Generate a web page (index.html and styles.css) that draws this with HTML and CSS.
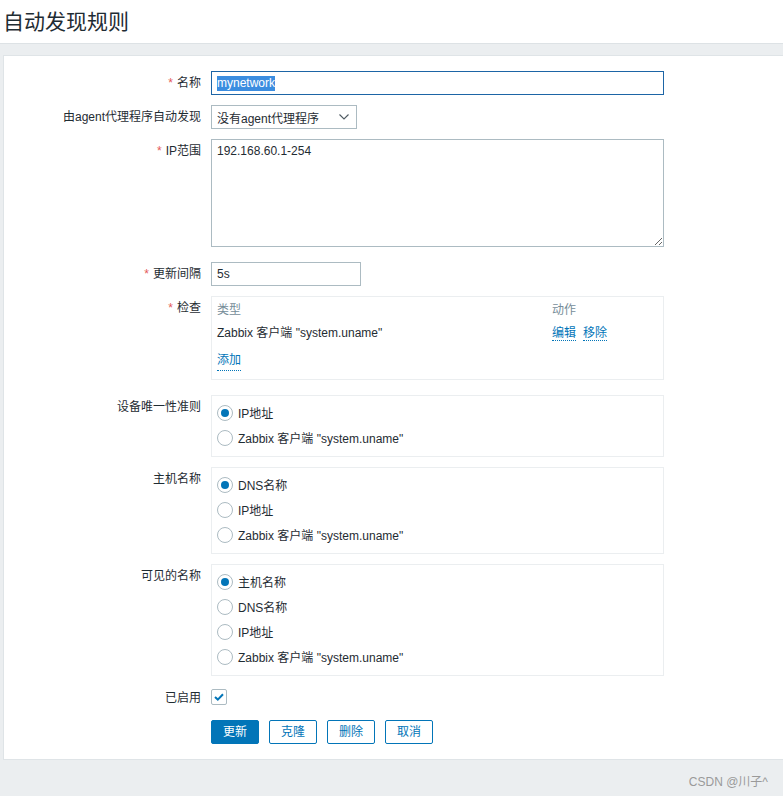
FILE: index.html
```html
<!DOCTYPE html>
<html lang="zh">
<head>
<meta charset="utf-8">
<title>自动发现规则</title>
<link rel="stylesheet" href="styles.css">
</head>
<body>
<header class="header"><h1 class="title">自动发现规则</h1></header>
<main class="main">
  <form class="panel">
    <div class="row">
      <label class="label"><span class="req">*</span>名称</label>
      <div class="field"><div class="input input-focus wide"><span class="sel">mynetwork</span></div></div>
    </div>
    <div class="row">
      <label class="label">由agent代理程序自动发现</label>
      <div class="field">
        <div class="input select"><span>没有agent代理程序</span>
          <svg class="chev" width="10" height="6" viewBox="0 0 10 6"><path d="M0.5 0.5 L5 5 L9.5 0.5" fill="none" stroke="#4f5b62" stroke-width="1.1"/></svg>
        </div>
      </div>
    </div>
    <div class="row row-tall">
      <label class="label"><span class="req">*</span>IP范围</label>
      <div class="field"><textarea class="textarea" readonly>192.168.60.1-254</textarea></div>
    </div>
    <div class="row">
      <label class="label"><span class="req">*</span>更新间隔</label>
      <div class="field"><input class="input interval" type="text" value="5s"></div>
    </div>
    <div class="row row-tall">
      <label class="label"><span class="req">*</span>检查</label>
      <div class="field">
        <div class="box checks">
          <div class="crow head"><span class="c1">类型</span><span class="c2">动作</span></div>
          <div class="crow item"><span class="c1">Zabbix 客户端 "system.uname"</span><span class="c2"><a class="link">编辑</a><a class="link">移除</a></span></div>
          <div class="crow add"><a class="link">添加</a></div>
        </div>
      </div>
    </div>
    <div class="row">
      <label class="label">设备唯一性准则</label>
      <div class="field">
        <ul class="box radios">
          <li><span class="radio on"></span>IP地址</li>
          <li><span class="radio"></span>Zabbix 客户端 "system.uname"</li>
        </ul>
      </div>
    </div>
    <div class="row">
      <label class="label">主机名称</label>
      <div class="field">
        <ul class="box radios">
          <li><span class="radio on"></span>DNS名称</li>
          <li><span class="radio"></span>IP地址</li>
          <li><span class="radio"></span>Zabbix 客户端 "system.uname"</li>
        </ul>
      </div>
    </div>
    <div class="row">
      <label class="label">可见的名称</label>
      <div class="field">
        <ul class="box radios">
          <li><span class="radio on"></span>主机名称</li>
          <li><span class="radio"></span>DNS名称</li>
          <li><span class="radio"></span>IP地址</li>
          <li><span class="radio"></span>Zabbix 客户端 "system.uname"</li>
        </ul>
      </div>
    </div>
    <div class="row row-check">
      <label class="label">已启用</label>
      <div class="field">
        <span class="checkbox"><svg width="10" height="8" viewBox="0 0 10 8"><path d="M1 4 L3.8 6.6 L9 1.2" fill="none" stroke="#0275b8" stroke-width="2"/></svg></span>
      </div>
    </div>
    <div class="row last">
      <span></span>
      <div class="field buttons">
        <button type="button" class="btn primary">更新</button>
        <button type="button" class="btn">克隆</button>
        <button type="button" class="btn">删除</button>
        <button type="button" class="btn">取消</button>
      </div>
    </div>
  </form>
  <footer class="footer">CSDN @川子^</footer>
</main>
</body>
</html>
```

FILE: styles.css
```css
* { box-sizing: border-box; }
html, body { margin: 0; padding: 0; }
body {
  background: #ebeef0;
  font-family: "Liberation Sans", "Noto Sans CJK SC", sans-serif;
  font-size: 12px;
  color: #1f2c33;
}
.header {
  background: #fff;
  height: 44px;
  border-bottom: 1px solid #dde2e5;
  padding-left: 3px;
}
.title {
  margin: 0;
  font-size: 21px;
  font-weight: normal;
  line-height: 43px;
  color: #1f2c33;
}
.main { padding-top: 11px; }
.panel {
  margin-left: 3px;
  background: #fff;
  border: 1px solid #dfe4e7;
  border-right: none;
  padding: 15px 0 15px 0;
}
.row {
  display: grid;
  grid-template-columns: 197px 453px;
  column-gap: 10px;
  margin-bottom: 10px;
}
.row-tall { margin-bottom: 15px; }
.row-check { min-height: 24px; }
.row.last { margin-bottom: 0; }
.label {
  text-align: right;
  padding-top: 5px;
  line-height: 14px;
  white-space: nowrap;
}
.req { color: #e45959; margin-right: 4px; }
.field { display: flex; align-items: flex-start; }
.input {
  height: 24px;
  border: 1px solid #acbbc2;
  padding: 0 5px;
  font: inherit;
  color: #1f2c33;
  background: #fff;
  outline: none;
}
.wide { width: 453px; display: flex; align-items: center; }
.input-focus { border-color: #1d65a6; }
.sel { background: #3b8de0; color: #fff; line-height: 15px; display: inline-block; }
.select {
  width: 146px;
  display: flex;
  align-items: center;
  justify-content: space-between;
  padding: 0 4px 0 5px;
}
.chev { margin-right: 3px; }
.textarea {
  width: 453px;
  height: 108px;
  border: 1px solid #acbbc2;
  padding: 4px 5px;
  font: inherit;
  line-height: 14px;
  color: #1f2c33;
  outline: none;
  display: block;
}
.interval { width: 150px; }
.box {
  width: 453px;
  border: 1px solid #ebeef0;
  margin: 0;
  list-style: none;
}
.checks { padding: 4px 5px 8px 5px; }
.crow { display: flex; line-height: 18px; height: 18px; }
.crow.item { margin-top: 5px; }
.crow.add { margin-top: 11px; }
.c1 { width: 335px; }
.head { color: #768d99; }
.link {
  color: #0275b8;
  border-bottom: 1px dotted #0275b8;
  line-height: 14px;
  cursor: pointer;
}
.c2 .link + .link { margin-left: 7px; }
.radios { padding: 4px 5px 6px 5px; }
.radios li {
  height: 25px;
  display: flex;
  align-items: center;
}
.radio {
  width: 16px;
  height: 16px;
  border: 1px solid #acbbc2;
  border-radius: 50%;
  margin-right: 5px;
  background: #fff;
  position: relative;
  flex: none;
}
.radio.on::after {
  content: "";
  position: absolute;
  left: 3px; top: 3px;
  width: 8px; height: 8px;
  border-radius: 50%;
  background: #0275b8;
}
.checkbox {
  width: 16px;
  height: 16px;
  margin-top: 3px;
  border: 1px solid #acbbc2;
  border-radius: 2px;
  display: flex;
  align-items: center;
  justify-content: center;
}
.buttons { gap: 10px; }
.btn {
  height: 24px;
  width: 48px;
  padding: 0;
  font: inherit;
  border: 1px solid #0275b8;
  border-radius: 2px;
  background: #fff;
  color: #0275b8;
  line-height: 22px;
}
.btn.primary { background: #0275b8; color: #fff; }
.footer {
  height: 37px;
  text-align: right;
  padding: 14px 15px 0 0;
  color: #9a9a9a;
  line-height: 16px;
}
```
